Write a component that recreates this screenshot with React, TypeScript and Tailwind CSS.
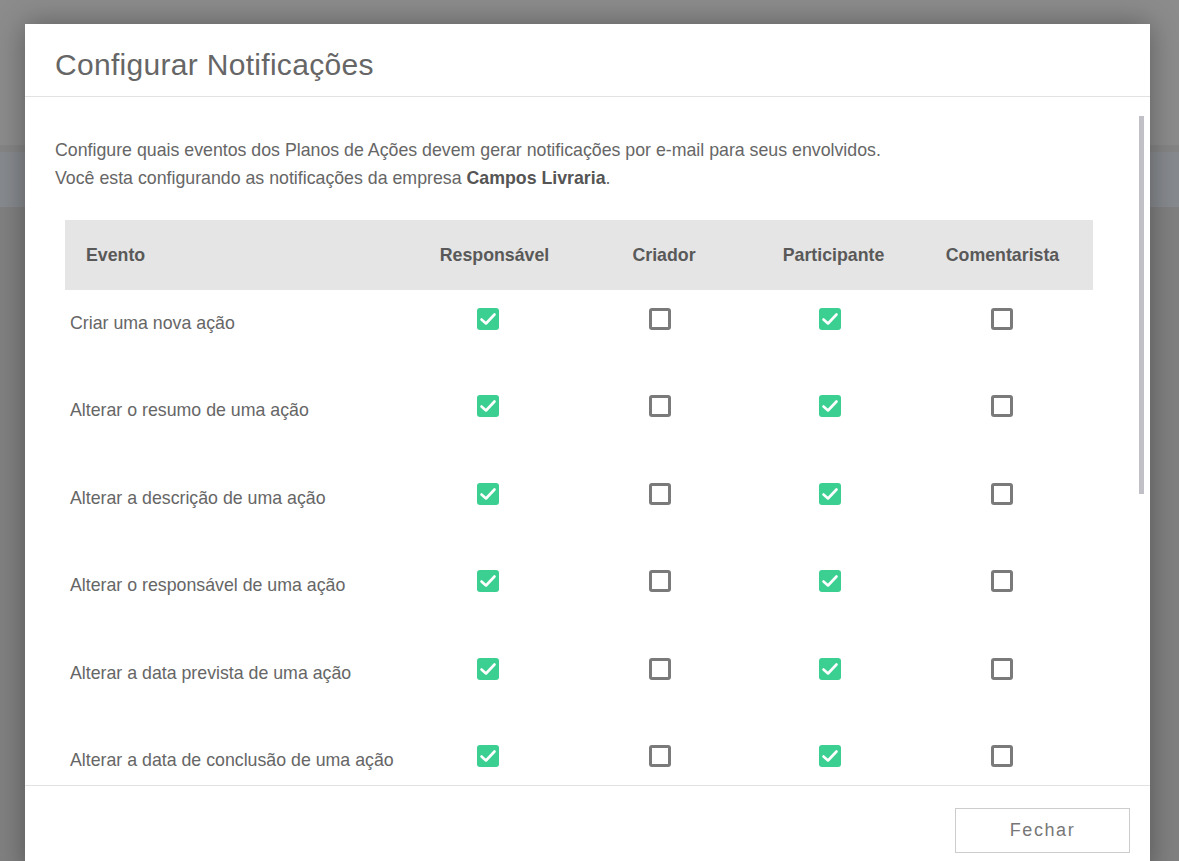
import React from 'react';

const font = { fontFamily: '"Liberation Sans", Arial, sans-serif' };

interface Row {
  label: string;
  values: boolean[];
}

const rows: Row[] = [
  { label: 'Criar uma nova ação', values: [true, false, true, false] },
  { label: 'Alterar o resumo de uma ação', values: [true, false, true, false] },
  { label: 'Alterar a descrição de uma ação', values: [true, false, true, false] },
  { label: 'Alterar o responsável de uma ação', values: [true, false, true, false] },
  { label: 'Alterar a data prevista de uma ação', values: [true, false, true, false] },
  { label: 'Alterar a data de conclusão de uma ação', values: [true, false, true, false] },
];

const headers = ['Responsável', 'Criador', 'Participante', 'Comentarista'];

// padding so each checkbox sits where it does in the picture
const cellPad = ['pl-[67px]', 'pl-[70px]', 'pl-[70px]', 'pl-[73px]'];

const Checkbox: React.FC<{ checked: boolean }> = ({ checked }) =>
  checked ? (
    <div className="w-[22px] h-[22px] rounded-[3px] bg-[#3ccf92] flex items-center justify-center">
      <svg width="18" height="18" viewBox="0 0 18 18" fill="none">
        <polyline points="2.5,9.5 7,13.5 15.5,4.5" stroke="#fff" strokeWidth="2.6" strokeLinecap="round" strokeLinejoin="round" />
      </svg>
    </div>
  ) : (
    <div className="w-[22px] h-[22px] rounded-[3px] border-[3px] border-[#7a7a7a] bg-white" />
  );

export default function App() {
  return (
    <div className="relative w-[1179px] h-[861px] overflow-hidden bg-[#818181]" style={font}>
      {/* page behind the overlay */}
      <div className="h-[145px] bg-[#8c8c8c]" />
      <div className="h-[7px] bg-[#858585]" />
      <div className="h-[55px] bg-[#878a8e]" />

      <div className="absolute left-[25px] top-[24px] w-[1125px] bg-white shadow-[0_0_28px_rgba(0,0,0,0.35)]">
        <div className="h-[73px] px-[30px] pt-[21px] border-b border-[#e2e2e2]">
          <h1 className="text-[30px] leading-[40px] text-[#666] tracking-[0.3px]">Configurar Notificações</h1>
        </div>

        <div className="relative h-[688px] overflow-hidden">
          <div className="absolute right-[6px] top-[19px] w-[5px] h-[378px] bg-[#c1c0c6]" />

          <div className="pt-[39px] pl-[30px] text-[17.75px] leading-[28px] text-[#666]">
            <p>Configure quais eventos dos Planos de Ações devem gerar notificações por e-mail para seus envolvidos.</p>
            <p>
              Você esta configurando as notificações da empresa <b className="font-bold text-[#555]">Campos Livraria</b>.
            </p>
          </div>

          <div className="ml-[40px] mt-[28px] w-[1028px]">
            <div className="grid grid-cols-[345px_169px_170px_169px_175px] h-[70px] bg-[#e5e5e5] items-center text-[17.75px] font-bold text-[#595959]">
              <div className="pl-[21px]">Evento</div>
              {headers.map((h, i) => (
                <div key={h} className={i === 3 ? 'text-center pr-[6px]' : 'text-center'}>
                  {h}
                </div>
              ))}
            </div>

            {rows.map((r) => (
              <div key={r.label} className="grid grid-cols-[345px_169px_170px_169px_175px] h-[87.4px]">
                <div className="pl-[5px] pt-[19px] text-[17.75px] leading-[28px] text-[#666]">{r.label}</div>
                {r.values.map((v, i) => (
                  <div key={i} className={`pt-[18px] ${cellPad[i]}`}>
                    <Checkbox checked={v} />
                  </div>
                ))}
              </div>
            ))}
          </div>
        </div>

        <div className="h-[90px] border-t border-[#e2e2e2] flex justify-end pt-[22px] pr-[20px]">
          <button className="w-[175px] h-[45px] border border-[#cccccc] bg-white text-[18px] text-[#777] tracking-[1.6px]">
            Fechar
          </button>
        </div>
      </div>
    </div>
  );
}
